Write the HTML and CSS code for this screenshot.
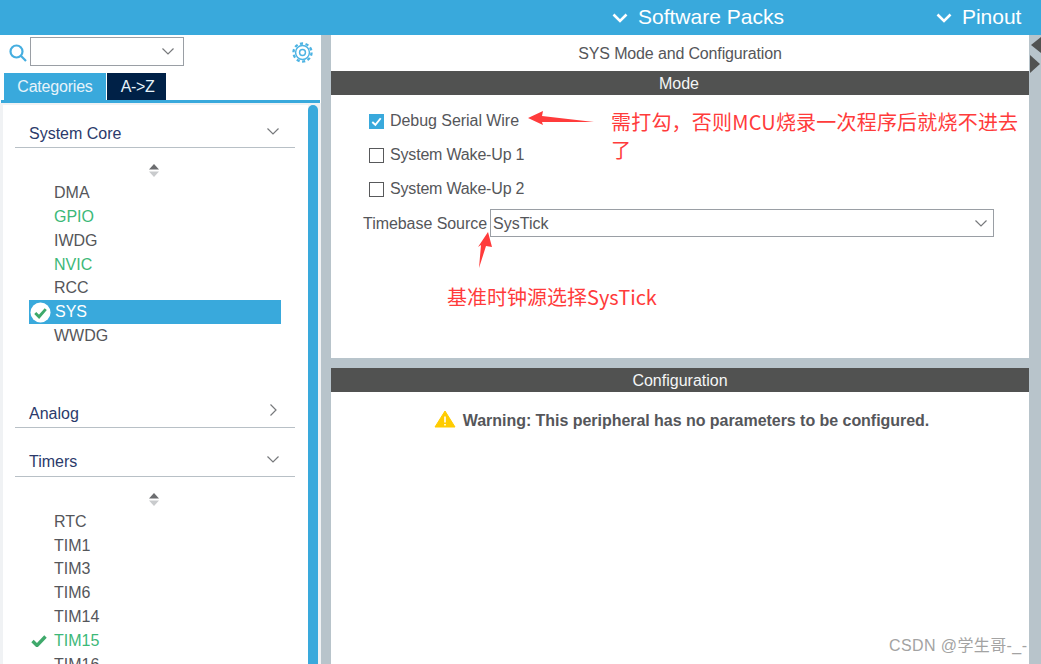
FILE: index.html
```html
<!DOCTYPE html>
<html lang="en">
<head>
    <meta charset="UTF-8">
    <meta name="viewport" content="width=device-width, initial-scale=1.0">
    <title>SYS Mode and Configuration</title>
    <link rel="stylesheet" href="styles.css">
</head>
<body>
    <header class="topbar">
        <div class="top-link top-packs">
            <svg class="top-chevron" viewBox="0 0 16 10"><path d="M1.5 1.5 8 8l6.5-6.5"/></svg>
            <span>Software Packs</span>
        </div>
        <div class="top-link top-pinout">
            <svg class="top-chevron" viewBox="0 0 16 10"><path d="M1.5 1.5 8 8l6.5-6.5"/></svg>
            <span>Pinout</span>
        </div>
    </header>

    <div class="workspace">
        <aside class="sidebar">
            <div class="search-row">
                <svg class="search-icon" viewBox="0 0 18 18"><circle cx="7.5" cy="7.5" r="6"/><path d="M11.8 11.8 17 17"/></svg>
                <div class="search-box">
                    <svg class="chevron" viewBox="0 0 12 7"><path d="M.5.5 6 6l5.5-5.5"/></svg>
                </div>
                <svg class="gear-icon" viewBox="0 0 20 20">
                    <circle class="gear-teeth" cx="10" cy="10" r="8.6"/>
                    <circle class="gear-ring" cx="10" cy="10" r="6.6"/>
                    <circle class="gear-ring" cx="10" cy="10" r="2.8"/>
                </svg>
            </div>
            <div class="tabs">
                <div class="tab tab-active">Categories</div>
                <div class="tab tab-dark">A-&gt;Z</div>
            </div>
            <div class="tree-wrap">
                <div class="tree">
                    <div class="group-head">
                        <span>System Core</span>
                        <svg class="chevron" viewBox="0 0 12 7"><path d="M.5.5 6 6l5.5-5.5"/></svg>
                    </div>
                    <div class="sort-arrows">
                        <svg viewBox="0 0 10 13"><path class="up" d="M5 0 10 5.5H0z"/><path class="down" d="M0 7.5h10L5 13z"/></svg>
                    </div>
                    <ul class="items">
                        <li class="item"><span class="mark"></span>DMA</li>
                        <li class="item item-green"><span class="mark"></span>GPIO</li>
                        <li class="item"><span class="mark"></span>IWDG</li>
                        <li class="item item-green"><span class="mark"></span>NVIC</li>
                        <li class="item"><span class="mark"></span>RCC</li>
                        <li class="item item-selected">
                            <span class="mark">
                                <svg class="check-circle" viewBox="0 0 22 22"><circle cx="11" cy="11" r="10.5"/><path d="M5.5 11.5 9.5 15.5 16.5 7.5"/></svg>
                            </span>SYS
                        </li>
                        <li class="item"><span class="mark"></span>WWDG</li>
                    </ul>
                    <div class="group-head group-analog">
                        <span>Analog</span>
                        <svg class="chevron chevron-right" viewBox="0 0 7 12"><path d="M.5.5 6 6 .5 11.5"/></svg>
                    </div>
                    <div class="group-head group-timers">
                        <span>Timers</span>
                        <svg class="chevron" viewBox="0 0 12 7"><path d="M.5.5 6 6l5.5-5.5"/></svg>
                    </div>
                    <div class="sort-arrows">
                        <svg viewBox="0 0 10 13"><path class="up" d="M5 0 10 5.5H0z"/><path class="down" d="M0 7.5h10L5 13z"/></svg>
                    </div>
                    <ul class="items">
                        <li class="item"><span class="mark"></span>RTC</li>
                        <li class="item"><span class="mark"></span>TIM1</li>
                        <li class="item"><span class="mark"></span>TIM3</li>
                        <li class="item"><span class="mark"></span>TIM6</li>
                        <li class="item"><span class="mark"></span>TIM14</li>
                        <li class="item item-green">
                            <span class="mark">
                                <svg class="check" viewBox="0 0 16 12"><path d="M1.5 6 6 10.5 14.5 1.5"/></svg>
                            </span>TIM15
                        </li>
                        <li class="item"><span class="mark"></span>TIM16</li>
                    </ul>
                </div>
                <div class="scrollbar"></div>
            </div>
        </aside>

        <main class="content">
            <div class="content-title">SYS Mode and Configuration</div>
            <section class="mode">
                <div class="bar bar-mode">Mode</div>
                <div class="mode-body">
                    <label class="option">
                        <span class="checkbox checkbox-on">
                            <svg viewBox="0 0 16 16"><path d="M3.5 8.5 6.8 11.5 12.5 4.5"/></svg>
                        </span>
                        Debug Serial Wire
                    </label>
                    <label class="option"><span class="checkbox"></span><span class="wake">System Wake-Up 1</span></label>
                    <label class="option"><span class="checkbox"></span><span class="wake">System Wake-Up 2</span></label>
                    <div class="timebase">
                        <span class="timebase-label">Timebase Source</span>
                        <div class="select">
                            <span class="select-value">SysTick</span>
                            <svg class="chevron" viewBox="0 0 12 7"><path d="M.5.5 6 6l5.5-5.5"/></svg>
                        </div>
                    </div>
                </div>
            </section>
            <section class="config">
                <div class="bar">Configuration</div>
                <div class="warning">
                    <svg class="warning-icon" viewBox="0 0 22 18">
                        <path class="warning-tri" d="M11 1 21 17H1z"/>
                        <path class="warning-mark" d="M11 6.5v6M11 14v1.6"/>
                    </svg>
                    <span>Warning: This peripheral has no parameters to be configured.</span>
                </div>
            </section>
        </main>

        <div class="gutter">
            <svg class="handles" viewBox="0 0 11 36"><path d="M11 0v16L1 8z"/><path d="M0 18l10 9-10 9z"/></svg>
        </div>
    </div>

    <!-- annotations drawn over the screenshot -->
    <svg class="arrows" viewBox="0 0 1041 664">
        <path d="M528 118 543 111 542 116 594 122 542 122 543 125z"/>
        <path d="M488 232 492 247 486 246 479 268 481 245 478 247z"/>
    </svg>
    <div class="note note-top">需打勾，否则MCU烧录一次程序后就烧不进去了</div>
    <div class="note note-bottom">基准时钟源选择SysTick</div>
    <div class="watermark">CSDN @学生哥-_-</div>
</body>
</html>
```

FILE: styles.css
```css
* {
    box-sizing: border-box;
}
body {
    position: relative;
    width: 1041px;
    height: 664px;
    margin: 0;
    overflow: hidden;
    font-family: "Liberation Sans", "Noto Sans CJK SC", sans-serif;
    font-size: 16px;
    color: #55565a;
    background-color: #fff;
}
svg {
    display: block;
}
ul {
    margin: 0;
    padding: 0;
    list-style: none;
}

.topbar {
    display: flex;
    height: 35px;
    background-color: #39a9dc;
    color: #fff;
    font-size: 21px;
}
.top-link {
    display: flex;
    align-items: center;
    gap: 10px;
}
.top-link span {
    padding-bottom: 2px;
}
.top-packs {
    margin-left: 612px;
}
.top-pinout {
    margin-left: 152px;
}
.top-chevron {
    width: 16px;
    height: 10px;
    fill: none;
    stroke: #fff;
    stroke-width: 2.6;
}

.workspace {
    display: flex;
    height: 629px;
    background-color: #b8c4cb;
}
.sidebar {
    display: flex;
    flex-direction: column;
    flex: none;
    width: 321px;
    background-color: #fff;
}
.search-row {
    display: flex;
    align-items: flex-start;
    height: 38px;
    padding: 2px 0 0 9px;
}
.search-icon {
    width: 18px;
    height: 18px;
    margin: 7px 3px 0 0;
    fill: none;
    stroke: #45aee0;
    stroke-width: 2.2;
}
.search-box {
    display: flex;
    align-items: center;
    justify-content: flex-end;
    width: 154px;
    height: 29px;
    padding-right: 9px;
    border: 1px solid #9a9fa5;
}
.gear-icon {
    width: 21px;
    height: 21px;
    margin: 5px 0 0 108px;
    fill: none;
    stroke: #4db3e3;
}
.gear-teeth {
    stroke-width: 2.2;
    stroke-dasharray: 3 2.4;
}
.gear-ring {
    stroke-width: 1.4;
}
.chevron {
    width: 12px;
    height: 7px;
    fill: none;
    stroke: #77797c;
    stroke-width: 1.2;
}
.chevron-right {
    width: 7px;
    height: 12px;
}

.tabs {
    display: flex;
    gap: 1px;
    height: 30px;
    margin: 0 1px;
    padding-left: 3px;
    border-bottom: 3px solid #39a9dc;
}
.tab {
    display: flex;
    align-items: center;
    justify-content: center;
    height: 27px;
    color: #e6f3fa;
}
.tab-active {
    width: 102px;
    letter-spacing: -0.2px;
    background-color: #39a9dc;
}
.tab-dark {
    width: 59px;
    padding-left: 2px;
    letter-spacing: -0.4px;
    background-color: #002147;
}
.tree-wrap {
    display: flex;
    flex: 1;
    min-height: 0;
    padding: 2px 3px 0;
    background-color: #f0f2f4;
}
.tree {
    flex: 1;
    padding: 14px 13px 0 12px;
    overflow: hidden;
    background-color: #fff;
}
.scrollbar {
    flex: none;
    width: 10px;
    border-radius: 5px 5px 0 0;
    background-color: #39a9dc;
}
.group-head {
    display: flex;
    align-items: center;
    justify-content: space-between;
    height: 29px;
    padding: 0 16px 0 14px;
    border-bottom: 1px solid #b8c0c6;
    color: #2b3a6b;
}
.group-head span {
    padding-top: 1px;
}
.group-head .chevron {
    margin-bottom: 4px;
}
.group-head .chevron-right {
    margin: 0 2px 6px 0;
}
.group-analog {
    margin-top: 50.6px;
}
.group-analog span {
    padding-top: 3px;
}
.group-timers {
    margin-top: 20px;
}
.sort-arrows {
    display: flex;
    justify-content: center;
    height: 33.4px;
    padding: 16px 2px 0 0;
}
.sort-arrows svg {
    width: 10px;
    height: 13px;
}
.sort-arrows .up {
    fill: #6c6d70;
}
.sort-arrows .down {
    fill: #c9cbcd;
}
.items {
    width: 252px;
    margin-left: 14px;
}
.item {
    display: flex;
    align-items: center;
    height: 23.8px;
}
.item-green {
    color: #3cb878;
}
.item-selected {
    background-color: #39a9dc;
    color: #fff;
}
.mark {
    display: flex;
    align-items: center;
    flex: none;
    width: 25px;
}
.item-selected .mark {
    width: 26px;
}
.check-circle {
    width: 21px;
    height: 21px;
    margin-left: 1px;
}
.check-circle circle {
    fill: #fff;
}
.check-circle path {
    fill: none;
    stroke: #3fa96b;
    stroke-width: 3;
}
.check {
    width: 16px;
    height: 12px;
    margin-left: 2px;
    fill: none;
    stroke: #3fa96b;
    stroke-width: 3.4;
}

.content {
    display: flex;
    flex-direction: column;
    flex: none;
    width: 698px;
    margin-left: 10px;
}
.content-title {
    height: 36px;
    padding-top: 10px;
    text-align: center;
    letter-spacing: -0.15px;
    background-color: #fff;
}
.bar {
    height: 24px;
    line-height: 25px;
    text-align: center;
    background-color: #515251;
    color: #f4f6f6;
}
.bar-mode {
    padding-right: 2px;
}
.mode {
    height: 287px;
    background-color: #fff;
}
.mode-body {
    padding: 9px 0 0 32px;
}
.option {
    display: flex;
    align-items: center;
    gap: 6px;
    height: 34px;
    padding-left: 6px;
    letter-spacing: -0.05px;
}
.wake {
    letter-spacing: -0.18px;
}
.checkbox {
    flex: none;
    width: 15px;
    height: 15px;
    border: 1px solid #58595b;
}
.checkbox-on {
    border: 0;
    background-color: #39a9dc;
}
.checkbox-on svg {
    width: 15px;
    height: 15px;
    fill: none;
    stroke: #fff;
    stroke-width: 2;
}
.timebase {
    display: flex;
    align-items: center;
    gap: 3px;
    margin-top: 3px;
}
.timebase-label {
    padding-top: 2px;
    letter-spacing: -0.05px;
}
.select {
    display: flex;
    align-items: center;
    justify-content: space-between;
    width: 504px;
    height: 28px;
    padding: 0 6px 0 2px;
    border: 1px solid #9a9fa5;
}
.select-value {
    padding-top: 2px;
}
.config {
    flex: 1;
    margin-top: 10px;
    background-color: #fff;
}
.warning {
    display: flex;
    align-items: center;
    justify-content: center;
    gap: 7px;
    padding: 20px 0 0 3px;
    font-weight: bold;
    letter-spacing: -0.04px;
}
.warning-icon {
    width: 22px;
    height: 18px;
    margin-top: -4px;
}
.warning-tri {
    fill: #ffcc00;
    stroke: #ffcc00;
    stroke-width: 1;
    stroke-linejoin: round;
}
.warning-mark {
    fill: none;
    stroke: #fff;
    stroke-width: 1.6;
}
.gutter {
    flex: 1;
    padding: 2px 0 0 1px;
}
.handles {
    width: 11px;
    height: 36px;
    fill: #515251;
}

.arrows {
    position: absolute;
    top: 0;
    left: 0;
    width: 1041px;
    height: 664px;
    fill: #ff3b3b;
}
.note {
    position: absolute;
    color: #ff3b3b;
    font-family: "Noto Sans CJK SC", sans-serif;
    font-size: 20px;
    line-height: 28px;
}
.note-top {
    top: 108px;
    left: 611px;
    width: 414px;
    letter-spacing: 0.2px;
}
.note-bottom {
    top: 283px;
    left: 447px;
}
.watermark {
    position: absolute;
    top: 632px;
    left: 889px;
    color: #a3a3a3;
    font-size: 16px;
    letter-spacing: 0.4px;
}
```
